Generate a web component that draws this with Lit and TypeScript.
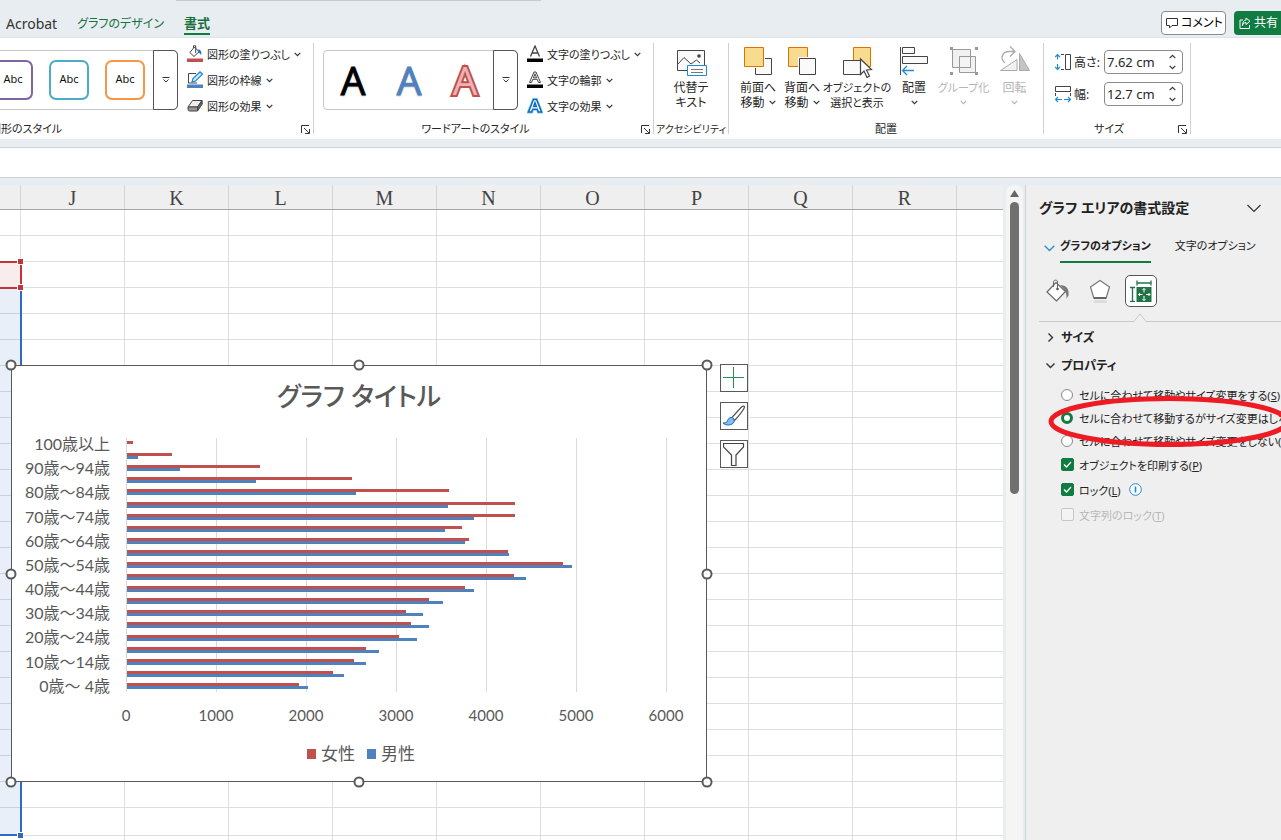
import { LitElement, html, css, svg, nothing } from "lit";
import { customElement } from "lit/decorators.js";
import { styleMap } from "lit/directives/style-map.js";
import { classMap } from "lit/directives/class-map.js";

const base = css`
  * { box-sizing: border-box; }
  button, input { font: inherit; color: inherit; }
  button { padding: 0; border: 0; background: none; text-align: center; white-space: nowrap; }
  svg { display: block; flex: none; }
`;

const chevron = (w = 7, color = "#333") => html`<svg width=${w} height="5" viewBox="0 0 7 5" fill="none" stroke=${color} stroke-width="1.2"><path d="M.7.8 3.5 3.6 6.3.8"/></svg>`;

const bucket = html`<svg width="16" height="18" viewBox="0 0 16 18"><path d="M6.500 3V.8h2.200V8M7.500 2 12 6.800 7 11.500 2.800 7.500z" fill="#fff" stroke="#444"/><path d="M11 4.500c2.500 0 3.800 2 3.200 5.500L11.500 7z" fill="#1a73c4"/><path fill="#c0504d" d="M0 13.500h16v3.500H0z"/></svg>`;
const outline = html`<svg width="16" height="18" viewBox="0 0 16 18" fill="none"><path d="M9 2.500H1.500v9.500H10" stroke="#444"/><path d="m5 11 1-3.500 7-6.500 2.500 2.200L8.500 10z" fill="#d8ebfa" stroke="#1f8ad2" stroke-width="1.300"/><path fill="#4f81bd" d="M0 13.500h16v3.500H0z"/></svg>`;
const effect = html`<svg width="16" height="18" viewBox="0 0 16 18" stroke="#444" stroke-linejoin="round"><path d="M5.500 3.500h9.500L10.500 10H1z" fill="#eee"/><path d="M1 10h9.500v4H2.500Q1 14 1 12z" fill="#999"/><path d="m15 3.500.3 3.500-4.800 7v-4z" fill="#666"/></svg>`;
const letter = (fill: string, stroke: string, sw: number, bar: boolean) => html`<svg width="16" height="18" viewBox="0 0 16 18"><path d="m2.500 11.500 4.500-10.500h2l4.500 10.500h-2l-1.300-3.200H5.800L4.500 11.500zM6.400 6.800h3.200L8 2.800z" fill=${fill} stroke=${stroke} stroke-width=${sw}/>${bar ? svg`<path d="M0 13.500h16v3.500H0z"/>` : nothing}</svg>`;
const thinLetter = html`<svg width="16" height="18" viewBox="0 0 16 18"><path d="M3.500 11.500 8 1l4.500 10.500M5.200 8h5.600" fill="none" stroke="#444" stroke-width="1.300"/><path d="M0 13.500h16v3.500H0z"/></svg>`;
const glyphFx = html`<svg width="16" height="18" viewBox="0 0 16 18"><path d="M1.500 15 6.500 2.500h3L14.500 15h-3.200l-1-2.800H5.700l-1 2.800zM6.600 9.500h2.800L8 5.600z" fill="#fff" stroke="#8cc8f0" stroke-width="3"/><path d="M1.500 15 6.500 2.500h3L14.500 15h-3.200l-1-2.800H5.700l-1 2.800zM6.600 9.500h2.800L8 5.600z" fill="#fff" stroke="#0f6cbd" stroke-width="1.500"/></svg>`;
const more = html`<svg width="8" height="6" viewBox="0 0 8 6" fill="none" stroke="#333"><path d="M.5.5h7M1.500 2.500 4 5l2.500-2.500"/></svg>`;
const launcher = html`<svg width="9" height="9" viewBox="0 0 9 9" fill="none" stroke="#333"><path d="M.5 8V.5H8M3 3l5 5M8.500 4v4.500H4"/></svg>`;

const altText = html`<svg width="32" height="30" viewBox="0 0 32 30" fill="none"><path d="M2.500 4.500h27v20h-27z" fill="#fafafa" stroke="#444"/><path d="m3 18 6-6.500 7 6.500M16 18l5.500-4 3.500 3" stroke="#444"/><circle cx="24" cy="10" r="1.800" fill="#444"/><path d="M12.500 19.500h19v10h-19z" fill="#fff" stroke="#1f8ad2"/><path d="M16 23.500h12M16 26.500h12" stroke="#777"/></svg>`;
const front = html`<svg width="32" height="30" viewBox="0 0 32 30"><path d="M13.500 12.500h16v16h-16z" fill="#fafafa" stroke="#444"/><path d="M0 0h23v22H0z" fill="#fff"/><path d="M2.500 1.500h19v19h-19z" fill="#f8db8f" stroke="#e07000"/></svg>`;
const back = html`<svg width="32" height="30" viewBox="0 0 32 30"><path d="M2.500 1.500h19v19h-19z" fill="#f8db8f" stroke="#e07000"/><path d="M12 11h20v19H12z" fill="#fff"/><path d="M13.500 12.500h16v16h-16z" fill="#fafafa" stroke="#444"/></svg>`;
const selectPane = html`<svg width="32" height="32" viewBox="0 0 32 32"><path d="M12.500 1.500h17v19h-17z" fill="#f8db8f" stroke="#e07000"/><path d="M2.500 14.500H20v14H2.500z" fill="#fafafa" stroke="#444"/><path d="m19.500 13 11 10.500-5 .5 3 6-2.500 1.500-3-6.500-3.500 3.500z" fill="#fff" stroke="#444" stroke-width="1.200"/></svg>`;
const align = html`<svg width="32" height="30" viewBox="0 0 32 30" fill="none"><path d="M2.500 1v28M4.500 1.500h12v6h-12zM4.500 10.500h25v7h-25z" stroke="#444" fill="#fafafa"/><path d="M16 24.500H4.500M9 20l-4.500 4.500L9 29" stroke="#1f8ad2" stroke-width="1.300"/></svg>`;
const grouping = html`<svg width="32" height="30" viewBox="0 0 32 30" fill="none" stroke="#999"><path d="M4.500 3.500h18v18h-18z" fill="#f1f1f1"/><path d="M11.500 10.500h16v16h-16z" fill="#e8e8e8" fill-opacity=".6"/><path d="M11.500 10.500h11v11h-11z" fill="#f4f4f4"/><path d="M2 1h3v3H2zM27 1h3v3h-3zM2 26h3v3H2zM27 26h3v3h-3z" fill="#999" stroke="none"/></svg>`;
const rotate = html`<svg width="32" height="30" viewBox="0 0 32 30" fill="none" stroke="#aaa"><path d="M1.500 24.500H18v-11z" fill="#f1f1f1"/><path d="m20.500 7.500 10 17h-10z" fill="#c4c4c4"/><path d="M6 17C0 12 4 5.500 10 5.500h6M11 .5l5 5-5 5" stroke-width="1.300"/></svg>`;
const heightIcon = html`<svg width="16" height="18" viewBox="0 0 16 18" fill="none"><path d="M2.500 1.500v5M2.500 11v5.500M0 4l2.500-2.500L5 4M0 14l2.500 2.500L5 14" stroke="#1f8ad2" stroke-width="1.200"/><path d="M10.500 1.500h5v15h-5zM6 1.500h3M6 16.500h3" stroke="#444"/></svg>`;
const widthIcon = html`<svg width="16" height="18" viewBox="0 0 16 18" fill="none"><path d="M.5 1.500h15v5H.5zM.5 8v3M15.500 8v3" stroke="#444"/><path d="M.5 14.500H7M9 14.500h6.500M3 12 .5 14.500 3 17M13 12l2.500 2.500L13 17" stroke="#1f8ad2" stroke-width="1.200"/></svg>`;

@customElement("ribbon-gallery")
class RibbonGallery extends LitElement {
  static styles = [base, css`
    :host { display: block; }
    .frame { display: flex; height: 60px; width: 100%; border: 1px solid #c8c8c8; border-radius: 4px; justify-content: flex-end; }
    .items { display: flex; flex: 1; min-width: 0; justify-content: flex-end; gap: 16px; padding-right: 9px; align-items: center; }
    .more { flex: none; width: 25px; margin: -1px; border: 1px solid #555; border-radius: 0 5px 5px 0; display: grid; place-items: center; }
  `];
  render() {
    return html`<div class="frame"><div class="items"><slot></slot></div><button class="more" aria-label="その他">${more}</button></div>`;
  }
}

@customElement("top-tabs")
class TopTabs extends LitElement {
  static styles = [base, css`
    :host { display: block; background: #e8edf1; border-bottom: 1px solid #dfe2e5; }
    .bar { height: 37px; display: flex; align-items: flex-start; padding-left: 6px; position: relative; }
    .search { position: absolute; left: 176px; top: 0; width: 365px; height: 1px; background: #c6cacd; }
    nav { display: flex; gap: 20px; padding-top: 14px; flex: 1; font-size: 12px; line-height: 19px; }
    a { color: #333; text-decoration: none; border-bottom: 2px solid transparent; white-space: nowrap; }
    .latin { font-size: 14px; }
    .green { color: #18713f; }
    .on { font-size: 13px; font-weight: 700; border-color: #107c41; }
    .actions { display: flex; gap: 8px; padding-top: 11px; width: 120px; overflow: hidden; }
    .actions button { height: 24px; display: flex; align-items: center; gap: 3px; border-radius: 4px; flex: none; font-size: 12px; line-height: 18px; }
    .comment { border: 1px solid #8a8a8a; background: #fff; padding: 0 4px; width: 65px; }
    .share { background: #107c41; color: #fff; padding: 0 5px; width: 70px; font-size: 13px; }
  `];
  render() {
    return html`<div class="bar"><span class="search"></span>
      <nav><a href="#" class="latin">Acrobat</a><a href="#" class="green">グラフのデザイン</a><a href="#" class="green on">書式</a></nav>
      <div class="actions">
        <button class="comment"><svg width="12" height="12" viewBox="0 0 12 12" fill="none" stroke="#333"><path d="M.5 1.500h11v7H6L3.500 11V8.500h-3z"/></svg>コメント</button>
        <button class="share"><svg width="12" height="12" viewBox="0 0 12 12" fill="none" stroke="#fff"><path d="M4 3H1v8.500h9.500V8M7 1l4 3.200L7 7.500V5.500C5 5.500 4 6.500 3.500 8.500 3.500 5 5 3.200 7 3z"/></svg>共有</button>
      </div></div>`;
  }
}

@customElement("excel-ribbon")
class ExcelRibbon extends LitElement {
  static styles = [base, css`
    :host { display: block; background: #fff; color: #262626; font-size: 12px; }
    .ribbon { display: flex; padding: 5px 0; overflow: hidden; }
    .group { flex: none; height: 91px; border-right: 1px solid #d0d0d0; }
    .body { height: 74px; display: flex; align-items: center; gap: 9px; }
    .caption { display: flex; align-items: center; font-size: 11px; line-height: 16px; margin-top: 4px; white-space: nowrap; }
    .caption span { flex: 1; text-align: center; }
    .caption button { width: 16px; flex: none; padding-left: 4px; height: 9px; }
    .shapes { width: 314px; }
    .wordart { width: 340px; }
    .wordart .body { padding-left: 9px; }
    .access { width: 75px; }
    .access .caption { font-size: 10px; }
    .arrange { width: 315px; }
    .size { width: 147px; }
    .shapes .caption span { margin-left: -10px; text-align: left; }
    .clip { width: 178px; overflow: hidden; display: flex; justify-content: flex-end; flex: none; }
    .clip ribbon-gallery { width: 206px; flex: none; }
    .wordart ribbon-gallery { width: 195px; }
    .abc { width: 40px; height: 40px; border: 2px solid; border-radius: 7px; background: #fff; font-size: 11px; padding-bottom: 4px; }
    .abc span { color: #111; }
    .purple { border-color: #8064a2; }
    .teal { border-color: #4bacc6; }
    .orange { border-color: #f79646; }
    .wa { font-family: "Open Sans", sans-serif; font-size: 39px; font-weight: 400; line-height: 54px; width: 40px; color: #000; -webkit-text-stroke: 1px currentColor; text-shadow: 0 1px 2px #aaa; }
    .wa.blue { color: #4f81bd; }
    .wa.red { color: #e9b4b5; -webkit-text-stroke: 4px #c0504d; paint-order: stroke fill; text-shadow: none; }
    .cmds { display: flex; flex-direction: column; font-size: 11px; }
    .cmds button { height: 26px; display: flex; align-items: center; gap: 4px; }
    .bigs { align-items: flex-start; gap: 0; padding-top: 3px; }
    .arrange .bigs { padding-left: 7px; }
    .big { display: flex; flex-direction: column; align-items: center; line-height: 15px; width: 44px; flex: none; }
    .ic { height: 34px; }
    .ln { display: flex; align-items: center; gap: 4px; height: 15px; }
    .tight { font-size: 11px; }
    .w66 { width: 66px; }
    .w48 { width: 48px; }
    .w50 { width: 51px; }
    .w75 { width: 74px; }
    .off { color: #b4b4b4; }
    .dims { flex-direction: column; align-items: stretch; gap: 8px; padding: 7px 7px 0 11px; }
    .dim { display: flex; align-items: center; height: 24px; }
    .dim label { flex: 1; margin-left: 3px; white-space: nowrap; }
    .spin { width: 79px; height: 24px; border: 1px solid #8a8a8a; border-radius: 4px; display: flex; align-items: center; background: #fff; }
    .spin input { width: 58px; border: 0; outline: 0; padding: 0 0 0 2px; background: none; font-size: 13px; height: 20px; }
    .arrows { display: flex; flex-direction: column; gap: 6px; margin-left: 6px; }
    .arrows button { height: 5px; }
    .up { transform: rotate(180deg); }
  `];
  private group(cls: string, label: string, body: unknown, launch = true) {
    return html`<section class="group ${cls}">${body}<div class="caption"><span>${label}</span>${launch ? html`<button aria-label="詳細">${launcher}</button>` : nothing}</div></section>`;
  }
  private cmd(icon: unknown, label: string) {
    return html`<button>${icon}<span>${label}</span>${chevron()}</button>`;
  }
  private big(icon: unknown, a: string, b: string, drop = false, cls = "") {
    const color = cls.includes("off") ? "#b4b4b4" : "#333";
    return html`<button class="big ${cls}"><span class="ic">${icon}</span><span class="ln">${a}</span><span class="ln">${b}${drop ? chevron(7, color) : nothing}</span></button>`;
  }
  private dim(id: string, icon: unknown, label: string, value: string) {
    return html`<div class="dim">${icon}<label for=${id}>${label}</label><span class="spin"><input id=${id} .value=${value}><span class="arrows"><button class="up" aria-label="増やす">${chevron()}</button><button aria-label="減らす">${chevron()}</button></span></span></div>`;
  }
  render() {
    return html`<div class="ribbon">
      ${this.group("shapes", "図形のスタイル", html`<div class="body"><div class="clip"><ribbon-gallery>
          <button class="abc purple"><span>Abc</span></button><button class="abc teal"><span>Abc</span></button><button class="abc orange"><span>Abc</span></button>
        </ribbon-gallery></div>
        <div class="cmds">${this.cmd(bucket, "図形の塗りつぶし")}${this.cmd(outline, "図形の枠線")}${this.cmd(effect, "図形の効果")}</div></div>`)}
      ${this.group("wordart", "ワードアートのスタイル", html`<div class="body"><ribbon-gallery>
          <button class="wa">A</button><button class="wa blue">A</button><button class="wa red">A</button>
        </ribbon-gallery>
        <div class="cmds">${this.cmd(thinLetter, "文字の塗りつぶし")}${this.cmd(letter("#fff", "#444", 1, true), "文字の輪郭")}${this.cmd(glyphFx, "文字の効果")}</div></div>`)}
      ${this.group("access", "アクセシビリティ", html`<div class="body bigs">${this.big(altText, "代替テ", "キスト", false, "w75")}</div>`, false)}
      ${this.group("arrange", "配置", html`<div class="body bigs">
        ${this.big(front, "前面へ", "移動", true)}
        ${this.big(back, "背面へ", "移動", true)}
        ${this.big(selectPane, "オブジェクトの", "選択と表示", false, "w66 tight")}
        ${this.big(align, "配置", "", true, "w48")}
        ${this.big(grouping, "グループ化", "", true, "w50 tight off")}
        ${this.big(rotate, "回転", "", true, "w50 off")}</div>`, false)}
      ${this.group("size", "サイズ", html`<div class="body dims">
        ${this.dim("h", heightIcon, "高さ:", "7.62 cm")}${this.dim("w", widthIcon, "幅:", "12.7 cm")}</div>`)}
    </div>`;
  }
}

const ROWS: [number, number][] = [
  [70, 0], [500, 120], [1475, 590], [2500, 1435], [3575, 2545], [4315, 3565], [4315, 3860],
  [3720, 3530], [3805, 3750], [4230, 4240], [4840, 4940], [4305, 4430], [3750, 3860],
  [3350, 3510], [3095, 3285], [3150, 3350], [3020, 3220], [2650, 2800], [2520, 2650],
  [2285, 2410], [1910, 2010],
];
const AGES = ["100歳以上", "90歳～94歳", "80歳～84歳", "70歳～74歳", "60歳～64歳", "50歳～54歳", "40歳～44歳", "30歳～34歳", "20歳～24歳", "10歳～14歳", "0歳～ 4歳"];

@customElement("age-chart")
class AgeChart extends LitElement {
  static styles = [base, css`
    :host { display: block; background: #fff; border: 1px solid #595959; color: #595959; position: relative; font-family: Lato, "Noto Sans CJK JP", sans-serif; }
    .title { text-align: center; font-size: 26px; line-height: 36px; font-weight: 500; padding-top: 12px; margin: 0; }
    .plotrow { display: flex; margin-top: 18px; padding-right: 39px; }
    .ages { width: 98px; height: 266px; margin-bottom: -6px; margin-right: 16px; display: grid; grid-template-rows: repeat(11, 1fr); font-size: 16px; line-height: 24px; text-align: right; white-space: pre; }
    .plot { flex: 1; height: 254px; margin-top: 6px; display: grid; grid-template-rows: repeat(21, 1fr); border-left: 1px solid #d9d9d9;
      background: repeating-linear-gradient(90deg, transparent 0 calc(100% / 6 - 1px), #d9d9d9 calc(100% / 6 - 1px) calc(100% / 6)); }
    .cat { display: flex; flex-direction: column; justify-content: center; }
    .bar { height: 3px; }
    .f { background: #c0504d; }
    .m { background: #4f81bd; }
    .axis { display: flex; justify-content: space-between; margin: 13px 18px 0 92px; font-size: 15px; line-height: 20px; }
    .axis span { width: 44px; text-align: center; }
    .legend { display: flex; justify-content: center; gap: 12px; font-size: 17px; line-height: 26px; margin-top: 16px; padding-left: 4px; }
    .legend span { display: flex; align-items: center; gap: 5px; }
    .key { width: 9px; height: 10px; }
    .handles { position: absolute; inset: -1px; pointer-events: none; }
    .dot { position: absolute; width: 11px; height: 11px; border: 2px solid #595959; border-radius: 50%; background: #fff; transform: translate(-50%, -50%); }
  `];
  render() {
    const pct = (v: number) => styleMap({ width: `${v / 60}%` });
    const dots = [[0, 0], [50, 0], [100, 0], [0, 50], [100, 50], [0, 100], [50, 100], [100, 100]];
    return html`<h2 class="title">グラフ タイトル</h2>
      <div class="plotrow"><div class="ages">${AGES.map((a) => html`<span>${a}</span>`)}</div>
      <div class="plot">${ROWS.map(([f, m]) => html`<div class="cat"><div class="bar f" style=${pct(f)}></div><div class="bar m" style=${pct(m)}></div></div>`)}</div></div>
      <div class="axis">${[0, 1000, 2000, 3000, 4000, 5000, 6000].map((n) => html`<span>${n}</span>`)}</div>
      <div class="legend"><span><i class="key f"></i>女性</span><span><i class="key m"></i>男性</span></div>
      <div class="handles">${dots.map(([x, y]) => html`<i class="dot" style=${styleMap({ left: `${x}%`, top: `${y}%` })}></i>`)}</div>`;
  }
}

@customElement("work-sheet")
class WorkSheet extends LitElement {
  static styles = [base, css`
    :host { display: flex; flex-direction: column; background: #fff; overflow: hidden; }
    .heads { display: flex; height: 25px; background: #efefef; border-bottom: 1px solid #a6a6a6; font: 20px/27px "Liberation Serif", serif; color: #444; overflow: hidden; flex: none; }
    .head { flex: none; width: 104px; text-align: center; border-right: 1px solid #d4d4d4; }
    .head.first { width: 21px; }
    .cells { flex: 1; position: relative; overflow: hidden; background: repeating-linear-gradient(90deg, #dedede 0 1px, transparent 1px 104px) 20px 0; }
    .row { height: 26px; border-bottom: 1px solid #dedede; }
    .row.end { height: 28px; }
    .names, .values { position: absolute; left: 0; width: 22px; }
    .names { top: 51px; height: 28px; background: #c0304018; border: solid #c4323c; border-width: 2px 2px 2px 0; }
    .values { top: 79px; height: 547px; background: #316ac51c; border: solid #316ac5; border-width: 0 2px 2px 0; }
    .grip { position: absolute; left: 17px; width: 5px; height: 5px; border: 1px solid #fff; box-sizing: content-box; background: #c4323c; }
    .g1 { top: 48px; }
    .g2 { top: 74px; }
    .g3 { top: 622px; background: #316ac5; }
    age-chart { position: absolute; left: 11px; top: 155px; width: 696px; height: 417px; }
    .tools { position: absolute; left: 720px; top: 154px; display: flex; flex-direction: column; gap: 10px; }
    .tools button { width: 28px; height: 28px; border: 1px solid #595959; background: #fff; display: grid; place-items: center; }
  `];
  render() {
    return html`<div class="heads"><span class="head first"></span>${[..."JKLMNOPQR", ""].map((c) => html`<span class="head">${c}</span>`)}</div>
      <div class="cells">
        ${Array.from({ length: 24 }, (_, i) => html`<div class=${classMap({ row: true, end: i === 23 })}></div>`)}
        <div class="names"></div><div class="values"></div>
        <i class="grip g1"></i><i class="grip g2"></i><i class="grip g3"></i>
        <age-chart></age-chart>
        <div class="tools">
          <button aria-label="グラフ要素"><svg width="22" height="22" viewBox="0 0 22 22" stroke="#2a9050"><path d="M10.500 0v21M0 10.500h21"/></svg></button>
          <button aria-label="グラフ スタイル"><svg width="24" height="24" viewBox="0 0 24 24"><path d="M9.500 14 19 3.500c1.500-1.500 3.500-2 3.500-.5 0 2-7.500 11-10 13.500z" fill="#fff" stroke="#555" stroke-width="1.200"/><path d="M9.500 13.500c-3 0-3.500 2-4 3.500S3 19 1 19c2.500 3 9.500 2.500 11-1 .8-2-.5-4.500-2.500-4.500z" fill="#83beec" stroke="#1569b8"/></svg></button>
          <button aria-label="グラフ フィルター"><svg width="22" height="24" viewBox="0 0 22 24"><path d="M.5 1.500h20v3.500L13 13v10.500H8.500V13L.5 5z" fill="#fafafa" stroke="#444" stroke-width="1.200"/></svg></button>
        </div>
      </div>`;
  }
}

@customElement("format-pane")
class FormatPane extends LitElement {
  static styles = [base, css`
    :host { display: block; position: relative; background: #efefef; border-left: 1px solid #cfd3d6; padding: 6px 0 0 13px; overflow: hidden; color: #222; font-size: 11px; white-space: nowrap; }
    .title { display: flex; align-items: center; justify-content: space-between; height: 34px; padding-right: 20px; }
    h1 { font-size: 14px; line-height: 20px; margin: 0; font-weight: 700; }
    .tabs { display: flex; margin-top: 11px; line-height: 20px; align-items: flex-start; padding-left: 5px; }
    .tabs svg { margin: 9px 5px 0 0; }
    .tab { border-bottom: 2px solid transparent; padding: 0 0 5px; margin-right: 24px; }
    .tab.on { border-color: #107c41; font-weight: 700; }
    .icons { display: flex; align-items: center; margin-top: 12px; padding-left: 7px; }
    .icons button { display: grid; place-items: center; width: 24px; height: 32px; margin-right: 18px; }
    .icons .sel { width: 32px; border: 1px solid #555; border-radius: 5px; background: #fff; margin-left: -5px; }
    .rule { display: flex; align-items: flex-end; margin-top: 6px; }
    .rule i { height: 1px; background: #c8c8c8; flex: 1; }
    .rule i:first-child { flex: none; width: 95px; }
    .sec { display: flex; align-items: center; gap: 6px; padding-left: 7px; height: 20px; font-size: 12px; font-weight: 700; margin-top: 5px; }
    .sec + .sec { margin-top: 8px; }
    .opts { padding: 8px 0 0 22px; }
    .opt { display: flex; align-items: center; gap: 6px; height: 23px; }
    .opt.chk { height: 25px; gap: 5px; }
    .opt.dis { color: #b8b8b8; }
    .opt svg { margin-left: 3px; }
    input { appearance: none; margin: 0; flex: none; width: 12px; height: 12px; border: 1px solid #888; border-radius: 50%; background: #fff; }
    input[type="radio"]:checked { border: 3px solid #107c41; }
    input[type="checkbox"] { width: 13px; height: 13px; border-radius: 2px; }
    input[type="checkbox"]:checked { border-color: #107c41; background: #107c41 url("data:image/svg+xml,%3Csvg xmlns='http://www.w3.org/2000/svg' viewBox='0 0 11 11'%3E%3Cpath d='M2 5.500l2.500 2.500 4.500-5' fill='none' stroke='white' stroke-width='1.300'/%3E%3C/svg%3E"); }
    input:disabled { border-color: #c6c6c6; background: #f3f3f3; }
    .ring { position: absolute; left: 21px; top: 208px; }
  `];
  private opt(type: string, id: string, text: string, key: string, tail = ")", on = false, dis = false, extra: unknown = nothing) {
    return html`<div class=${classMap({ opt: true, chk: type === "checkbox", dis })}>
      <input type=${type} id=${id} name=${type === "radio" ? "placement" : id} ?checked=${on} ?disabled=${dis}>
      <label for=${id}>${text}(<u>${key}</u>${tail}</label>${extra}</div>`;
  }
  render() {
    return html`<div class="title"><h1>グラフ エリアの書式設定</h1><svg width="14" height="9" viewBox="0 0 14 9" fill="none" stroke="#333" stroke-width="1.200"><path d="m.5 1 6.500 6.500L13.500 1"/></svg></div>
      <div class="tabs"><svg width="11" height="7" viewBox="0 0 11 7" fill="none" stroke="#2e8fd0" stroke-width="1.400"><path d="M.7.8 5.500 5.600 10.300.8"/></svg>
        <button class="tab on">グラフのオプション</button><button class="tab">文字のオプション</button></div>
      <div class="icons">
        <button aria-label="塗りつぶしと線"><svg width="24" height="24" viewBox="0 0 24 24" fill="none" stroke="#666"><path d="M1 13 10 3.500l9.500 9L10.500 22z" fill="#fff" stroke-width="1.200"/><path d="M7.500 8V3c0-2.500 4-2.500 4 0v6"/><circle cx="11.500" cy="10" r="1.300" fill="#555" stroke="none"/><path d="M14 6c6 0 9.500 4 8.500 10.500l-2 3c0-4-.5-6-1.500-8z" fill="#777" stroke="none"/></svg></button>
        <button aria-label="効果"><svg width="22" height="24" viewBox="0 0 22 24" fill="none"><path d="M11 1.500 20.500 8l-3.300 11H4.800L1.500 8z" fill="#fff" stroke="#777" stroke-width="1.200"/><path d="M4.800 19h12.400" stroke="#666" stroke-width="2"/><path d="M5 21h12.500l.5 3H4.500z" fill="#dcdcdc"/></svg></button>
        <button class="sel" aria-label="サイズとプロパティ"><svg width="22" height="22" viewBox="0 0 22 22" fill="none" stroke="#217346" stroke-width="1.300"><path d="M6.500 7h15v15h-15z" fill="#217346" stroke="none"/><path d="M0 7.500h5M0 21.500h5M2.500 7.500v14M7 .5v5M21 .5v5M7 3h14"/><path d="M14 8.500v4M14 16v4.500M8.500 14.500h4M16 14.500h4M12.500 10 14 8.500l1.500 1.500M12.500 19l1.500 1.500 1.500-1.500M10 13l-1.500 1.500L10 16M18.500 13l1.500 1.500-1.500 1.500" stroke="#fff" stroke-width="1"/></svg></button>
      </div>
      <div class="rule"><i></i><svg width="12" height="9" viewBox="0 0 12 9" fill="none" stroke="#c8c8c8"><path d="M0 8.500 6 .8l6 7.700"/></svg><i></i></div>
      <div class="sec"><svg width="9" height="9" viewBox="0 0 9 9" fill="none" stroke="#333" stroke-width="1.400"><path d="m2.500.5 4 4-4 4"/></svg>サイズ</div>
      <div class="sec"><svg width="9" height="9" viewBox="0 0 9 9" fill="none" stroke="#333" stroke-width="1.400"><path d="m.5 2.500 4 4 4-4"/></svg>プロパティ</div>
      <div class="opts">
        ${this.opt("radio", "r1", "セルに合わせて移動やサイズ変更をする", "S")}
        ${this.opt("radio", "r2", "セルに合わせて移動するがサイズ変更はしない", "M", ")", true)}
        ${this.opt("radio", "r3", "セルに合わせて移動やサイズ変更をしない", "D")}
        ${this.opt("checkbox", "c1", "オブジェクトを印刷する", "P", ")", true)}
        ${this.opt("checkbox", "c2", "ロック", "L", ")", true, false, html`<svg width="13" height="13" viewBox="0 0 13 13" fill="#fff" stroke="#1f8ad2"><circle cx="6.500" cy="6.500" r="5.800"/><path d="M6.500 3.500v6" stroke-width="1.600"/></svg>`)}
        ${this.opt("checkbox", "c3", "文字列のロック", "T", ")", false, true)}
      </div>
      <svg class="ring" width="250" height="56" viewBox="0 0 250 56" fill="none" stroke="#ed1c24" stroke-width="5"><ellipse cx="122" cy="28.500" rx="118" ry="23"/></svg>`;
  }
}

@customElement("app-root")
class AppRoot extends LitElement {
  static styles = [base, css`
    :host { display: flex; flex-direction: column; height: 100vh; overflow: hidden; background: #e7edf1; font-family: "Noto Sans", "Noto Sans CJK JP", sans-serif; font-feature-settings: "palt"; }
    .formula { width: 100%; height: 31px; flex: none; margin: 8px 0 7px; border: solid #cdd0d3; border-width: 1px 0; border-radius: 0; background: #fff; outline: 0; }
    .main { flex: 1; min-height: 0; display: flex; }
    work-sheet { flex: 1; min-width: 0; }
    .scroll { width: 17px; margin: 0 2px 0 3px; border-radius: 8px 8px 0 0; background: #f5f5f5; display: flex; flex-direction: column; align-items: center; padding-top: 5px; }
    .thumb { width: 9px; height: 292px; border-radius: 5px; background: #707070; margin-top: 5px; }
    format-pane { width: 256px; flex: none; }
  `];
  render() {
    return html`<top-tabs></top-tabs><excel-ribbon></excel-ribbon>
      <input class="formula" aria-label="数式バー">
      <div class="main"><work-sheet></work-sheet>
        <div class="scroll"><svg width="9" height="7" viewBox="0 0 9 7"><path d="M4.500 0 9 7H0z" fill="#666"/></svg><div class="thumb"></div></div>
        <format-pane></format-pane></div>`;
  }
}
